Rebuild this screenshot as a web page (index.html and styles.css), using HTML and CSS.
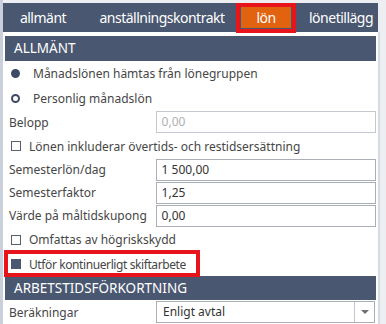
FILE: index.html
```html
<!DOCTYPE html>
<html lang="sv">
<head>
<meta charset="UTF-8">
<meta name="viewport" content="width=device-width, initial-scale=1.0">
<title>Lön</title>
<link rel="stylesheet" href="styles.css">
</head>
<body>

<div class="page">
  <div class="tabs">
    <div class="tab tab-general">allmänt</div>
    <div class="tab tab-contract">anställningskontrakt</div>
    <div class="tab tab-salary active">lön</div>
    <div class="tab tab-extra">lönetillägg</div>
  </div>
  <div class="mark mark-tab"></div>

  <div class="panel">
    <div class="section">ALLMÄNT</div>

    <div class="row option first">
      <span class="radio checked"></span>
      <span>Månadslönen hämtas från lönegruppen</span>
    </div>
    <div class="row option">
      <span class="radio"></span>
      <span>Personlig månadslön</span>
    </div>
    <div class="row field">
      <span class="label">Belopp</span>
      <span class="box disabled">0,00</span>
    </div>
    <div class="row option">
      <span class="check"></span>
      <span>Lönen inkluderar övertids- och restidsersättning</span>
    </div>
    <div class="row field tight">
      <span class="label">Semesterlön/dag</span>
      <span class="box">1 500,00</span>
    </div>
    <div class="row field tight">
      <span class="label">Semesterfaktor</span>
      <span class="box">1,25</span>
    </div>
    <div class="row field tight">
      <span class="label">Värde på måltidskupong</span>
      <span class="box">0,00</span>
    </div>
    <div class="row option first">
      <span class="check"></span>
      <span>Omfattas av högriskskydd</span>
    </div>
    <div class="row option">
      <span class="check checked"></span>
      <span class="narrow">Utför kontinuerligt skiftarbete</span>
    </div>

    <div class="section">ARBETSTIDSFÖRKORTNING</div>

    <div class="row field">
      <span class="label">Beräkningar</span>
      <span class="box select">
        <span class="select-text">Enligt avtal</span>
        <span class="select-btn"><span class="arrow"></span></span>
      </span>
    </div>
  </div>
  <div class="mark mark-shift"></div>
</div>

</body>
</html>
```

FILE: styles.css
```css
body {
  margin: 0;
  background: #eceef2;
  font-family: 'Noto Sans', 'Open Sans', sans-serif;
  font-size: 12px;
  color: #464646;
}

.page {
  position: relative;
  height: 324px;
  overflow: hidden;
  border-left: 3px solid #c9d0dc;
  padding-top: 3px;
}

/* tab bar */
.tabs {
  display: flex;
  align-items: center;
  width: 375px;
  height: 29px;
  background: #4a5771;
}

.tab {
  height: 21px;
  line-height: 21px;
  color: #fff;
  font-size: 14px;
  letter-spacing: -0.5px;
  white-space: nowrap;
  text-align: center;
}

.tab-general {
  width: 80px;
}

.tab-contract {
  width: 158px;
}

.tab-salary {
  width: 50px;
}

.tab-extra {
  flex: 1;
  text-align: left;
  padding-left: 18px;
}

.tab.active {
  background: #e2630f;
}

/* red annotation frames */
.mark {
  position: absolute;
  border: 4px solid #e8141c;
  box-sizing: border-box;
}

.mark-tab {
  left: 233px;
  top: 3px;
  width: 60px;
  height: 30px;
}

.mark-shift {
  left: 1px;
  top: 250px;
  width: 196px;
  height: 27px;
}

/* content panel */
.panel {
  width: 371px;
  padding: 4px 2px 0 2px;
  background: #fff;
  border-right: 2px solid #d6dae1;
  height: 300px;
}

.section {
  height: 24px;
  line-height: 24px;
  padding-left: 9px;
  background: #4a5771;
  color: #fff;
  font-size: 13.5px;
}

.section:first-child {
  height: 25px;
  line-height: 25px;
}

.row {
  display: flex;
  align-items: center;
  height: 24px;
}

.row.first {
  height: 25px;
}

.row.tight {
  height: 23px;
}

.option {
  padding-left: 6px;
}

.field {
  padding-left: 4px;
}

.label {
  width: 147px;
}

.narrow {
  letter-spacing: -0.4px;
}

.radio {
  width: 9px;
  height: 9px;
  border-radius: 50%;
  box-sizing: border-box;
  border: 2px solid #3d4a63;
  margin-right: 13px;
}

.radio.checked {
  background: #3d4a63;
}

.check {
  width: 10px;
  height: 10px;
  box-sizing: border-box;
  border: 1px solid #5a5f6a;
  margin-right: 8px;
}

.check.checked {
  background: #4a5771;
  border-color: #4a5771;
}

.box {
  box-sizing: border-box;
  width: 221px;
  height: 22px;
  line-height: 20px;
  border: 1px solid #a9aeb8;
  padding-left: 5px;
  color: #333;
  background: #fff;
}

.box.disabled {
  color: #b0b0b0;
  border-color: #c4c8cf;
}

.select {
  display: flex;
  width: 219px;
  padding-left: 0;
}

.select-text {
  flex: 1;
  padding-left: 6px;
}

.select-btn {
  width: 19px;
  border-left: 1px solid #c4c8cf;
  display: flex;
  align-items: center;
  justify-content: center;
}

.arrow {
  width: 0;
  height: 0;
  border-left: 4px solid transparent;
  border-right: 4px solid transparent;
  border-top: 4px solid #6d6f74;
}
```
